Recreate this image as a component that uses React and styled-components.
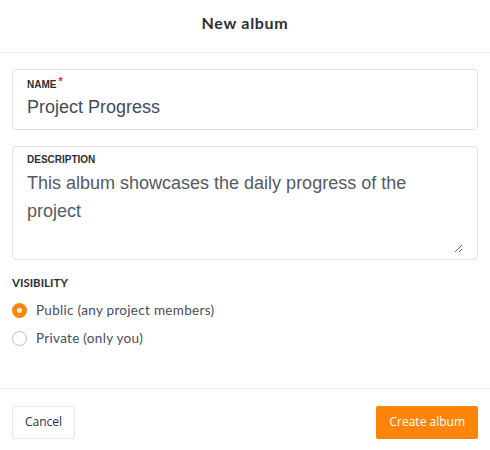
import React, { useEffect, useRef } from 'react';
import styled, { createGlobalStyle } from 'styled-components';

const GlobalStyle = createGlobalStyle`
    html, body { margin: 0; padding: 0; background: #fff; }
    * { box-sizing: border-box; }
`

const Modal = styled.div`
    width: 490px;
    height: 450px;
    display: flex;
    flex-direction: column;
    background: #fff;
    font-family: Lato, "Noto Sans", sans-serif;
`

const Header = styled.div`
    height: 53px;
    display: flex;
    align-items: center;
    justify-content: center;
    border-bottom: 1px solid #ebebeb;
    h2 {
        margin: 0;
        font-size: 16px;
        font-weight: 700;
        color: #2d2f33;
        letter-spacing: 0.7px;
        padding-bottom: 8px;
    }
`

const Body = styled.div`
    flex: 1;
    padding: 16px 12px 0;
    display: flex;
    flex-direction: column;
    gap: 16px;
    border-bottom: 1px solid #ebebeb;
`

const Field = styled.label`
    display: flex;
    flex-direction: column;
    border: 1px solid #e2e2e6;
    border-radius: 4px;
    padding: ${p => p.$area ? '7px 14px 0' : '9px 14px 0'};
    height: ${p => p.$area ? '114px' : '61px'};
`

const Label = styled.span`
    display: block;
    font-family: "Liberation Sans", Arial, sans-serif;
    font-size: 10px;
    font-weight: 700;
    color: #2d2f33;
    line-height: 12px;
    height: 12px;
    sup {
        color: #e02424;
        font-size: 11px;
        line-height: 0;
        margin-left: 2px;
        vertical-align: 3px;
    }
`

const Input = styled.input`
    border: none;
    outline: none;
    padding: 0;
    margin-top: 5px;
    font-family: "Liberation Sans", Arial, sans-serif;
    font-size: 18px;
    line-height: 22px;
    color: #434b59;
    background: transparent;
    height: 22px;
`

const Area = styled.textarea`
    border: none;
    outline: none;
    padding: 0;
    margin-top: 3px;
    font-family: "Liberation Sans", Arial, sans-serif;
    font-size: 18px;
    line-height: 28px;
    color: #555a63;
    resize: vertical;
    height: 84px;
    background: transparent;
    caret-color: #222;
`

const Section = styled.div`
    display: flex;
    flex-direction: column;
    gap: 8px;
    h4 {
        margin: 0 0 2px;
        font-size: 11.5px;
        line-height: 14px;
        font-weight: 700;
        color: #2d2f33;
    }
`

const Option = styled.label`
    display: flex;
    align-items: center;
    gap: 9px;
    font-size: 13.5px;
    letter-spacing: 0.3px;
    color: #4a4d55;
    height: 20px;
`

const Radio = styled.span`
    width: 15px;
    height: 15px;
    flex: none;
    border-radius: 50%;
    border: ${p => p.$on ? '5px solid #ff8508' : '1px solid #b9bcc3'};
    background: #fff;
`

const Footer = styled.div`
    height: 61px;
    padding: 17px 12px 0;
    display: flex;
    align-items: flex-start;
    justify-content: space-between;
`

const Button = styled.button`
    height: 33px;
    padding: 0 12px 2px;
    border-radius: 2px;
    font-family: "Open Sans", "Noto Sans", sans-serif;
    font-size: 12px;
    cursor: pointer;
    border: 1px solid ${p => p.$primary ? '#ff8508' : '#e6e6e6'};
    background: ${p => p.$primary ? '#ff8508' : '#fff'};
    color: ${p => p.$primary ? '#fff' : '#2d2f33'};
`

export default function App() {
    const areaRef = useRef(null)

    useEffect(() => {
        const el = areaRef.current
        if (el) {
            el.focus()
            el.setSelectionRange(el.value.length, el.value.length)
        }
    }, [])

    return (
        <Modal>
            <GlobalStyle />
            <Header>
                <h2>New album</h2>
            </Header>
            <Body>
                <Field>
                    <Label>NAME<sup>*</sup></Label>
                    <Input defaultValue='Project Progress' />
                </Field>
                <Field $area>
                    <Label>DESCRIPTION</Label>
                    <Area ref={areaRef} defaultValue='This album showcases the daily progress of the project' />
                </Field>
                <Section>
                    <h4>VISIBILITY</h4>
                    <Option><Radio $on />Public (any project members)</Option>
                    <Option><Radio />Private (only you)</Option>
                </Section>
            </Body>
            <Footer>
                <Button>Cancel</Button>
                <Button $primary>Create album</Button>
            </Footer>
        </Modal>
    )
}
